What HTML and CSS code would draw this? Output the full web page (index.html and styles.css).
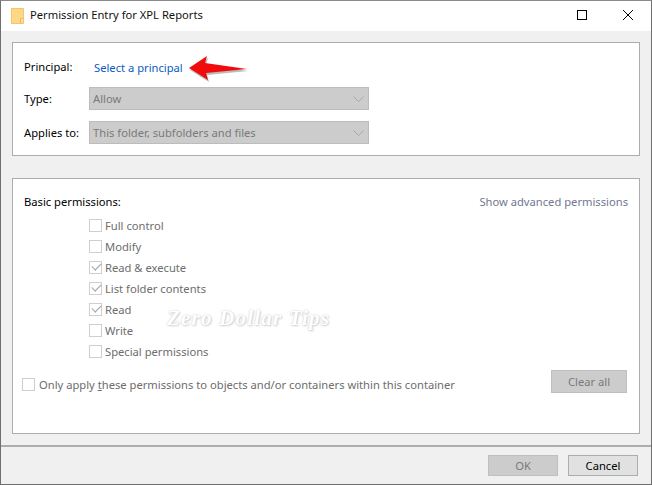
FILE: index.html
```html
<!DOCTYPE html>
<html lang="en">
<head>
  <meta charset="UTF-8">
  <title>Permission Entry for XPL Reports</title>
  <link rel="stylesheet" href="styles.css">
</head>
<body>
  <div class="window">
    <div class="titlebar">
      <svg class="folder" width="13" height="16" viewBox="0 0 13 16">
        <path d="M.5.5h12v15H.5z" fill="#fdd987" stroke="#f5c46e"/>
        <path d="M9.5 15.5v-5h3" fill="#fde3a6" stroke="#f0b95e"/>
      </svg>
      <span class="title">Permission Entry for XPL Reports</span>
      <div class="controls">
        <svg width="10" height="10" viewBox="0 0 10 10"><rect x=".5" y=".5" width="9" height="9" fill="none" stroke="#000"/></svg>
        <svg width="10" height="10" viewBox="0 0 10 10"><path d="M0 0l10 10M10 0L0 10" stroke="#000" fill="none"/></svg>
      </div>
    </div>

    <div class="content">
      <section class="panel panel-top">
        <div class="row row-principal">
          <span class="label">Principal:</span>
          <a class="link">Select a principal</a>
          <svg class="arrow" width="62" height="30" viewBox="0 0 62 30">
            <path d="M2 15 20 3l-2 7 42 6-41 4 2 7z" fill="#555" opacity=".4" transform="translate(1 2)"/>
            <path d="M2 15 20 3l-2 7 42 6-41 4 2 7z" fill="#f00c0c"/>
          </svg>
        </div>
        <div class="row">
          <span class="label">Type:</span>
          <div class="select">Allow<svg class="chev" width="11" height="6" viewBox="0 0 11 6"><path d="M.5.5l5 5 5-5" fill="none" stroke="#a8a8a8"/></svg></div>
        </div>
        <div class="row">
          <span class="label">Applies to:</span>
          <div class="select">This folder, subfolders and files<svg class="chev" width="11" height="6" viewBox="0 0 11 6"><path d="M.5.5l5 5 5-5" fill="none" stroke="#a8a8a8"/></svg></div>
        </div>
      </section>

      <section class="panel panel-bottom">
        <div class="perm-head">
          <span class="label">Basic permissions:</span>
          <span class="advanced">Show advanced permissions</span>
        </div>
        <ul class="perms">
          <li><i class="box"></i>Full control</li>
          <li><i class="box"></i>Modify</li>
          <li><i class="box checked"></i>Read &amp; execute</li>
          <li><i class="box checked"></i>List folder contents</li>
          <li><i class="box checked"></i>Read</li>
          <li><i class="box"></i>Write</li>
          <li><i class="box"></i>Special permissions</li>
        </ul>
        <div class="only-row">
          <span class="only"><i class="box"></i><span>Only apply <u>t</u>hese permissions to objects and/or containers within this container</span></span>
          <div class="btn btn-off btn-clear">Clear all</div>
        </div>
        <span class="watermark">Zero Dollar Tips</span>
      </section>
    </div>

    <div class="footer">
      <div class="btn btn-off">OK</div>
      <div class="btn">Cancel</div>
    </div>
  </div>
</body>
</html>
```

FILE: styles.css
```css
* {
  box-sizing: border-box;
}
html, body {
  margin: 0;
  height: 100%;
}
body {
  font-family: 'Noto Sans', sans-serif;
  font-size: 11.2px;
  color: #000;
  overflow: hidden;
}
.window {
  height: 485px;
  display: flex;
  flex-direction: column;
  background: #f0f0f0;
  border: 1px solid #6f6f6f;
  border-top-color: #8a8a8a;
}
.titlebar {
  height: 30px;
  flex: none;
  background: #fff;
  display: flex;
  align-items: center;
  padding: 0 0 1px 10px;
}
.folder {
  margin-right: 6px;
}
.title {
  color: #111;
  margin-bottom: 2px;
}
.controls {
  margin-left: auto;
  display: flex;
  gap: 36px;
  padding-right: 18px;
  margin-bottom: 2px;
}
.content {
  flex: 1;
  padding: 11px 11px 0;
  display: flex;
  flex-direction: column;
  gap: 22px;
}
.panel {
  position: relative;
  background: #fff;
  border: 1px solid #adadad;
  padding: 0 11px;
}
.panel-top {
  height: 114px;
  padding-top: 13px;
}
.panel-bottom {
  height: 256px;
  padding-top: 15px;
}
.row {
  display: flex;
  align-items: center;
  height: 23px;
  margin-bottom: 11px;
}
.row-principal {
  height: 22px;
  margin-bottom: 9px;
}
.row-principal .label {
  margin-bottom: 2px;
}
.label {
  width: 65px;
  flex: none;
}
.link {
  margin-left: 5px;
  color: #0a5bc4;
}
.arrow {
  margin-left: 4px;
  margin-top: 2px;
  flex: none;
}
.select {
  width: 280px;
  height: 23px;
  background: #cccccc;
  border: 1px solid #bcbcbc;
  color: #7a7a7a;
  padding-left: 3px;
  display: flex;
  align-items: center;
  justify-content: space-between;
}
.chev {
  margin-right: 4px;
}
.perm-head {
  display: flex;
  justify-content: space-between;
  height: 17px;
  margin-bottom: 4px;
}
.perm-head .label {
  width: auto;
}
.advanced {
  color: #717790;
}
.perms {
  list-style: none;
  margin: 0;
  padding: 0 0 0 65px;
}
.perms li {
  display: flex;
  align-items: center;
  height: 21px;
  color: #6d6d6d;
}
.box {
  width: 13px;
  height: 13px;
  border: 1px solid #cfcfcf;
  background: #fff;
  margin-right: 3px;
  flex: none;
  position: relative;
}
.checked::after {
  content: "";
  position: absolute;
  left: 2px;
  top: 1px;
  width: 8px;
  height: 4px;
  border-left: 1px solid #a8a8a8;
  border-bottom: 1px solid #a8a8a8;
  transform: rotate(-45deg) scale(1, 1.1);
}
.only-row {
  display: flex;
  justify-content: space-between;
  align-items: center;
  margin-top: 8px;
  margin-left: -2px;
  padding-right: 1px;
}
.only {
  display: flex;
  align-items: center;
  color: #6d6d6d;
  margin-top: 6px;
}
.only .box {
  margin-right: 4px;
}
.watermark {
  position: absolute;
  left: 154px;
  top: 127px;
  font: italic bold 21px 'Liberation Serif', serif;
  letter-spacing: 1.2px;
  color: #fff;
  text-shadow: 0 0 2px #c8c8c8, 1px 1px 2px #d4d4d4;
}
.btn {
  width: 70px;
  height: 21px;
  background: #e1e1e1;
  border: 1px solid #adadad;
  display: flex;
  align-items: center;
  justify-content: center;
}
.btn-off {
  background: #cccccc;
  border-color: #bfbfbf;
  color: #7a7a7a;
}
.btn-clear {
  width: 76px;
  height: 23px;
}
.footer {
  height: 39px;
  flex: none;
  border-top: 2px solid #adadad;
  display: flex;
  justify-content: flex-end;
  align-items: center;
  gap: 10px;
  padding-right: 13px;
}
```
